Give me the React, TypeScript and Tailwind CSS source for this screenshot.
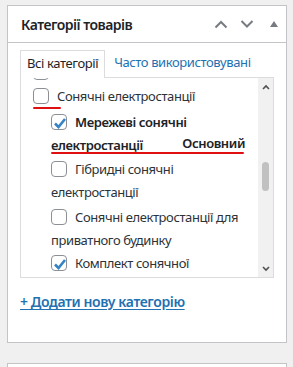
import React from "react";

const font = { fontFamily: '"Noto Sans", "Open Sans", sans-serif' };

function Box({ checked }: { checked?: boolean }) {
  return (
    <span className="relative mr-[8px] inline-block h-[16px] w-[16px] rounded-[4px] border border-[#8c8f94] bg-white align-[-3px]">
      {checked && (
        <svg viewBox="0 0 20 20" className="absolute left-[-2px] top-[-2px] h-[20px] w-[20px]">
          <path d="M5 10.5 L8.5 14 L15 6" fill="none" stroke="#3582c4" strokeWidth="2.6" />
        </svg>
      )}
    </span>
  );
}

export default function App() {
  return (
    <div className="h-[367px] w-[293px] overflow-hidden bg-[#f0f0f1] pt-[5px] pl-[7px] text-[13px] tracking-[-0.4px] text-[#2c3338]" style={font}>
      <div className="w-[280px] border border-[#c3c4c7] bg-white">
        <div className="flex h-[37px] items-center border-b border-[#c3c4c7] pl-[13px] pr-[8px]">
          <div className="flex-1 text-[14px] font-semibold tracking-[-0.5px] text-[#1d2327]">Категорії товарів</div>
          <svg width="14" height="10" viewBox="0 0 14 10" className="mr-[12px]">
            <path d="M1.5 8.5 L7 3 L12.5 8.5" fill="none" stroke="#787c82" strokeWidth="2" />
          </svg>
          <svg width="14" height="10" viewBox="0 0 14 10" className="mr-[16px]">
            <path d="M1.5 2 L7 7.5 L12.5 2" fill="none" stroke="#787c82" strokeWidth="2" />
          </svg>
          <svg width="8" height="6" viewBox="0 0 8 6">
            <path d="M0 6 L4 0 L8 6 Z" fill="#787c82" />
          </svg>
        </div>
        <div className="px-[12px] pb-[12px] pt-[7px]">
          <div className="flex items-end">
            <div className="relative z-10 mb-[-1px] h-[28px] border border-b-0 border-[#dcdcde] bg-white px-[6px] pt-[3px] text-[#1d2327]">Всі категорії</div>
            <div className="ml-[9px] pb-[5px] text-[#2271b1]">Часто використовувані</div>
          </div>
          <div className="relative h-[201px] overflow-hidden border border-[#dcdcde] bg-white">
            <div className="mr-[16px] mt-[-17px] pl-[12px] leading-[23px]">
              <div className="h-[24px]"><Box /></div>
              <div className="h-[24px]"><Box />Сонячні електростанції</div>
              <div className="ml-[18px] mt-[2px]">
                <div className="relative font-semibold text-[#1d2327]">
                  <Box checked />Мережеві сонячні електростанції
                  <span className="absolute right-[12px] bottom-[2px]">Основний</span>
                </div>
                <div className="mt-[1px]"><Box />Гібридні сонячні електростанції</div>
                <div className="mt-[2px]"><Box />Сонячні електростанції для приватного будинку</div>
                <div><Box checked />Комплект сонячної електростанції</div>
              </div>
            </div>
            <div className="absolute right-0 top-0 flex h-full w-[15px] flex-col items-center bg-[#f1f1f1]">
              <svg width="8" height="6" viewBox="0 0 8 6" className="mt-[6px]">
                <path d="M1 5 L4 2 L7 5" fill="none" stroke="#505050" strokeWidth="1.6" />
              </svg>
              <div className="mt-[72px] h-[29px] w-[7px] rounded-full bg-[#c1c1c1]" />
              <div className="flex-1" />
              <svg width="8" height="6" viewBox="0 0 8 6" className="mb-[5px]">
                <path d="M1 1 L4 4 L7 1" fill="none" stroke="#505050" strokeWidth="1.6" />
              </svg>
            </div>
            <div className="absolute left-[12px] top-[29px] h-[2px] w-[28px] rounded-full bg-[#e01010]" />
            <div className="absolute left-[30px] top-[74px] h-[2px] w-[193px] rounded-full bg-[#e01010]" />
          </div>
          <div className="mt-[13px] pb-[17px]">
            <span className="text-[14px] font-semibold text-[#2271b1] underline underline-offset-2">+ Додати нову категорію</span>
          </div>
        </div>
      </div>
      <div className="mt-[20px] h-[40px] w-[280px] border border-[#c3c4c7] bg-white" />
    </div>
  );
}
